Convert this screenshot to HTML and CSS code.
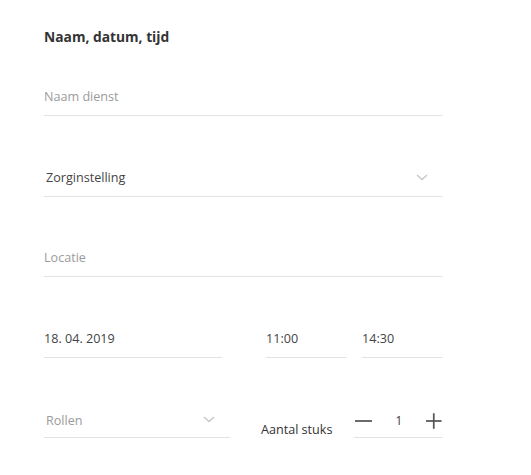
FILE: index.html
```html
<!DOCTYPE html>
<html lang="nl">
<head>
<meta charset="utf-8">
<link rel="stylesheet" href="styles.css">
</head>
<body>
<form class="form">
  <h2 class="title">Naam, datum, tijd</h2>
  <div class="fields">
    <div class="field"><span class="placeholder">Naam dienst</span></div>
    <div class="field field-select">
      <span class="value indent">Zorginstelling</span>
      <svg class="chev" width="12" height="7" viewBox="0 0 12 7"><path d="M1 1l5 4.5L11 1" fill="none" stroke="#c8c8c8" stroke-width="1.5"/></svg>
    </div>
    <div class="field"><span class="placeholder">Locatie</span></div>
    <div class="row">
      <div class="field date"><span class="value">18. 04. 2019</span></div>
      <div class="field time t1"><span class="value">11:00</span></div>
      <div class="field time t2"><span class="value">14:30</span></div>
    </div>
    <div class="row">
      <div class="field field-select roles">
        <span class="placeholder indent">Rollen</span>
        <svg class="chev" width="12" height="7" viewBox="0 0 12 7"><path d="M1 1l5 4.5L11 1" fill="none" stroke="#c8c8c8" stroke-width="1.5"/></svg>
      </div>
      <div class="qty-label">Aantal stuks</div>
      <div class="field stepper">
        <svg class="minus" width="20" height="2" viewBox="0 0 20 2"><rect width="20" height="2" fill="#555"/></svg>
        <span class="value count">1</span>
        <svg class="plus" width="18" height="18" viewBox="0 0 18 18"><rect x="8" y="0" width="2" height="18" fill="#555"/><rect x="0" y="8" width="18" height="2" fill="#555"/></svg>
      </div>
    </div>
  </div>
</form>
</body>
</html>
```

FILE: styles.css
```css
html, body {
  margin: 0;
  padding: 0;
  background: #fff;
}
body {
  font-family: "Open Sans", "Lato", Arial, sans-serif;
  color: #4a4a4a;
}
.form {
  width: 399px;
  padding: 28px 0 0 44px;
}
.title {
  margin: 0;
  font-size: 13.8px;
  line-height: 17px;
  font-weight: 700;
  color: #333;
}
.fields {
  margin-top: 34px;
  display: flex;
  flex-direction: column;
  gap: 43.5px;
}
.field {
  box-sizing: border-box;
  height: 37px;
  border-bottom: 1px solid #e3e3e3;
  display: flex;
  align-items: flex-end;
  padding-bottom: 10px;
  font-size: 12.6px;
  line-height: 16px;
}
.placeholder { color: #9b9b9b; }
.value { color: #444; }
.indent { margin-left: 2px; }
.field-select { justify-content: space-between; }
.chev { margin: 0 15px 5px 0; }
.row {
  display: flex;
  align-items: flex-end;
}
.date { width: 178px; }
.t1 { width: 81px; margin-left: 44px; }
.t2 { width: 81px; margin-left: 15px; }
.roles { width: 186px; padding-bottom: 8px; }
.roles .chev { margin-bottom: 6px; }
.qty-label {
  margin-left: 31px;
  width: 93px;
  font-size: 12.6px;
  line-height: 16px;
  color: #333;
}
.stepper {
  width: 89px;
  align-items: center;
  padding: 3px 1px 0 1px;
  height: 37px;
}
.count { margin-left: 23px; }
.plus { margin-left: 24px; }
```
